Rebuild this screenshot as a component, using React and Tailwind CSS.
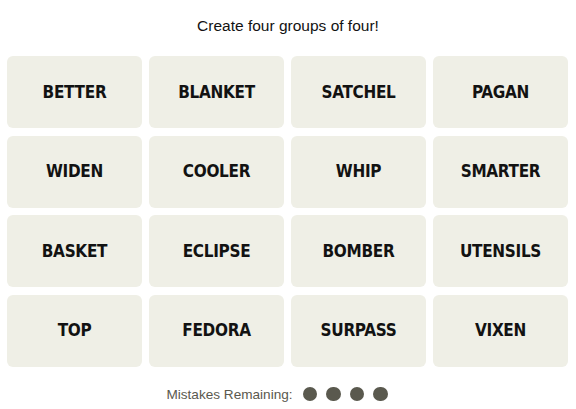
import React from "react";

const words = [
  "BETTER", "BLANKET", "SATCHEL", "PAGAN",
  "WIDEN", "COOLER", "WHIP", "SMARTER",
  "BASKET", "ECLIPSE", "BOMBER", "UTENSILS",
  "TOP", "FEDORA", "SURPASS", "VIXEN",
];

export default function App() {
  return (
    <div className="w-[576px] h-[409px] bg-white flex flex-col font-['Liberation_Sans',Arial,sans-serif] text-[#121212]">
      <div className="pt-[16px] text-center text-[15.5px] leading-[20px]">
        Create four groups of four!
      </div>
      <div className="mt-[20px] ml-[7px] grid grid-cols-[repeat(4,135px)] auto-rows-[72px] gap-x-[7px] gap-y-[7.5px]">
        {words.map((w) => (
          <div
            key={w}
            className="bg-[#efefe6] rounded-[6px] flex items-center justify-center font-bold text-[17px] tracking-[-0.3px] leading-none font-['DejaVu_Sans_Condensed',sans-serif]"
          >
            {w}
          </div>
        ))}
      </div>
      <div className="mt-[20px] flex items-center justify-center pr-[22px] h-[15px]">
        <span className="text-[13.6px] leading-[15px] text-[#5a594e]">Mistakes Remaining:</span>
        <div className="ml-[10px] flex gap-[9px]">
          <span className="w-[14.5px] h-[14.5px] rounded-full bg-[#5a594e]" />
          <span className="w-[14.5px] h-[14.5px] rounded-full bg-[#5a594e]" />
          <span className="w-[14.5px] h-[14.5px] rounded-full bg-[#5a594e]" />
          <span className="w-[14.5px] h-[14.5px] rounded-full bg-[#5a594e]" />
        </div>
      </div>
    </div>
  );
}
